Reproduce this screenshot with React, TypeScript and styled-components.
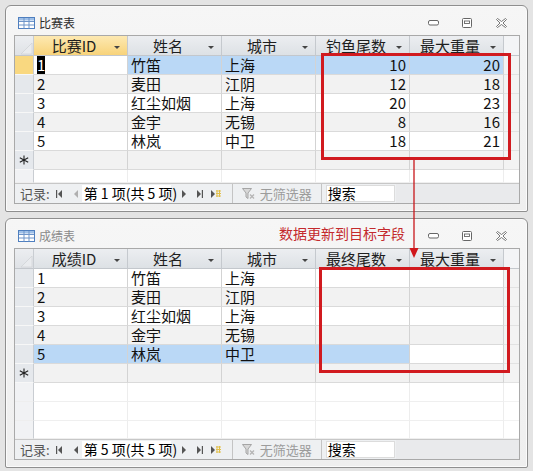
import React from "react";
import styled, { createGlobalStyle } from "styled-components";

const GlobalStyle = createGlobalStyle`
  html, body {
    margin: 0;
    padding: 0;
    background: #e4e4e4;
  }
  body {
    font-family: "Noto Sans CJK SC", "Liberation Sans", sans-serif;
  }
`;

const Page = styled.div`
  position: relative;
  width: 533px;
  height: 471px;
  padding: 5px 0 0 5px;
  box-sizing: border-box;
  display: flex;
  flex-direction: column;
  gap: 6px;
  overflow: hidden;
`;

const Window = styled.div`
  width: 523px;
  box-sizing: border-box;
  border: 1px solid #8f8f8f;
  border-radius: 6px 6px 2px 2px;
  background: linear-gradient(#f6f6f6, #efefef);
  box-shadow: inset 0 0 0 1px #fbfbfb;
  padding: 0 7px 7px 8px;
`;

const TitleBar = styled.div`
  height: 29px;
  padding-top: 5px;
  box-sizing: border-box;
  display: flex;
  align-items: center;
`;

const TableIcon = styled.svg`
  margin-left: 4px;
  flex: none;
`;

const TitleText = styled.span<{ $active: boolean }>`
  margin-left: 4px;
  font-size: 12px;
  line-height: 14px;
  color: ${(p) => (p.$active ? "#2b2b2b" : "#8a8a8a")};
`;

const Controls = styled.div`
  margin-left: auto;
  margin-right: 2px;
  display: flex;
`;

const ControlButton = styled.div`
  width: 34px;
  height: 20px;
  display: flex;
  align-items: center;
  justify-content: center;
`;

const Grid = styled.div`
  border: 1px solid #a9a9a9;
  background: #ffffff;
  display: flex;
  flex-direction: column;
`;

const HeaderRow = styled.div`
  display: flex;
  height: 20px;
`;

const Corner = styled.div`
  width: 19px;
  flex: none;
  box-sizing: border-box;
  border-right: 1px solid #c9cdd2;
  border-bottom: 1px solid #c3c7cc;
  background: linear-gradient(#eceef1, #dfe2e6);
  display: flex;
  align-items: flex-end;
  justify-content: flex-end;
`;

const HeaderCell = styled.div<{ $active?: boolean }>`
  width: 94px;
  flex: none;
  box-sizing: border-box;
  border-right: 1px solid #c5c9ce;
  border-bottom: 1px solid #c3c7cc;
  background: ${(p) =>
    p.$active
      ? "linear-gradient(#fde9b2, #f8d37a)"
      : "linear-gradient(#eceef1, #dde1e5)"};
  display: flex;
  align-items: center;
  padding-right: 7px;
  font-size: 15px;
  line-height: 18px;
  color: #1e1e1e;
`;

const HeaderLabel = styled.span`
  flex: 1;
  text-align: center;
  white-space: nowrap;
`;

const DropArrow = styled.span`
  width: 0;
  height: 0;
  border-left: 3px solid transparent;
  border-right: 3px solid transparent;
  border-top: 3px solid #444;
  margin-top: 3px;
`;

const HeaderFill = styled.div`
  flex: 1;
  border-bottom: 1px solid #c3c7cc;
  background: #f3f4f6;
`;

const Row = styled.div<{ $height?: number }>`
  display: flex;
  height: ${(p) => p.$height ?? 19}px;
`;

const Selector = styled.div<{ $current?: boolean; $faint?: boolean }>`
  width: 19px;
  flex: none;
  box-sizing: border-box;
  border-right: 1px solid #c9cdd2;
  border-bottom: 1px solid ${(p) => (p.$faint ? "#eeeeee" : "#f7f7f7")};
  background: ${(p) => (p.$current ? "#f9d880" : p.$faint ? "#f1f2f4" : "#e5e8ec")};
  display: flex;
  align-items: center;
  justify-content: center;
`;

const Cell = styled.div<{ $bg: string; $right?: boolean; $faint?: boolean }>`
  width: 94px;
  flex: none;
  box-sizing: border-box;
  border-right: 1px solid ${(p) => (p.$faint ? "#ededed" : "#d3d3d3")};
  border-bottom: 1px solid ${(p) => (p.$faint ? "#efefef" : "#dadada")};
  background: ${(p) => p.$bg};
  padding: 0 3px 0 3px;
  display: flex;
  align-items: center;
  justify-content: ${(p) => (p.$right ? "flex-end" : "flex-start")};
  font-size: 15px;
  line-height: 18px;
  color: #111;
  white-space: nowrap;
`;

const RowFill = styled.div<{ $faint?: boolean }>`
  flex: 1;
  border-bottom: 1px solid ${(p) => (p.$faint ? "#f2f2f2" : "#e2e2e2")};
  background: ${(p) => (p.$faint ? "#ffffff" : "#f3f3f3")};
`;

const Caret = styled.span`
  background: #000;
  color: #fff;
`;

const NavBar = styled.div`
  height: 19px;
  border-top: 1px solid #c7c7c7;
  background: #eef0f2;
  display: flex;
  align-items: center;
  font-size: 13px;
  color: #555;
`;

const NavLabel = styled.span`
  margin-left: 5px;
  line-height: 16px;
  white-space: nowrap;
`;

const NavIcon = styled.svg<{ $gap: number }>`
  margin-left: ${(p) => p.$gap}px;
  flex: none;
`;

const RecordBox = styled.div`
  margin-left: 4px;
  width: 89px;
  height: 17px;
  background: #fff;
  color: #000;
  font-size: 14px;
  line-height: 17px;
  padding-left: 2px;
  box-sizing: border-box;
  white-space: nowrap;
`;

const Separator = styled.div<{ $gap: number }>`
  margin-left: ${(p) => p.$gap}px;
  width: 1px;
  height: 19px;
  background: #c4c4c4;
  flex: none;
`;

const FilterText = styled.span`
  margin-left: 5px;
  color: #9c9c9c;
  font-size: 13px;
  white-space: nowrap;
`;

const SearchBox = styled.div`
  margin-left: 4px;
  width: 69px;
  height: 17px;
  box-sizing: border-box;
  background: #fff;
  border: 1px solid #dcdcdc;
  color: #000;
  font-size: 14px;
  line-height: 15px;
  padding-left: 1px;
`;

const NavRest = styled.div`
  flex: 1;
  align-self: stretch;
  margin-left: 1px;
  background: #e9eaec;
`;

const RedBox = styled.div<{ $x: number; $y: number; $w: number; $h: number }>`
  position: absolute;
  left: ${(p) => p.$x}px;
  top: ${(p) => p.$y}px;
  width: ${(p) => p.$w}px;
  height: ${(p) => p.$h}px;
  box-sizing: border-box;
  border: 3px solid #d11a1f;
  pointer-events: none;
`;

const Note = styled.div`
  position: absolute;
  left: 279px;
  top: 224px;
  font-size: 14px;
  line-height: 18px;
  color: #c42a2d;
  white-space: nowrap;
`;

const ArrowSvg = styled.svg`
  position: absolute;
  left: 408px;
  top: 160px;
`;

const TableGlyph = () => (
  <TableIcon width="17" height="12" viewBox="0 0 17 12">
    <rect x="0.5" y="0.5" width="16" height="11" fill="#fff" stroke="#4f7fbf" />
    <rect x="1" y="1" width="15" height="2.5" fill="#9fc0e8" />
    <path d="M1 4.5h15M1 8h15M6 1v10.5M11 1v10.5" stroke="#6f95c9" strokeWidth="1" />
  </TableIcon>
);

const WindowControls = () => (
  <Controls>
    <ControlButton>
      <svg width="11" height="6" viewBox="0 0 11 6">
        <rect x="0.5" y="0.5" width="10" height="4.5" rx="1.5" fill="#fff" stroke="#666" />
      </svg>
    </ControlButton>
    <ControlButton>
      <svg width="10" height="10" viewBox="0 0 10 10">
        <rect x="0.5" y="0.5" width="9" height="9" rx="1" fill="#fff" stroke="#666" />
        <rect x="2.5" y="3" width="5" height="2.5" fill="#fff" stroke="#666" strokeWidth="0.9" />
      </svg>
    </ControlButton>
    <ControlButton>
      <svg width="11" height="10" viewBox="0 0 11 10">
        <path
          d="M0.5 1.5L1.5 0.5L5.5 3.5L9.5 0.5L10.5 1.5L7 5L10.5 8.5L9.5 9.5L5.5 6.5L1.5 9.5L0.5 8.5L4 5Z"
          fill="#fff"
          stroke="#666"
          strokeWidth="0.9"
        />
      </svg>
    </ControlButton>
  </Controls>
);

const Star = () => (
  <svg width="10" height="10" viewBox="0 0 10 10">
    <path d="M5 0.5v9M0.8 2.7l8.4 4.6M0.8 7.3l8.4-4.6" stroke="#222" strokeWidth="1.1" />
  </svg>
);

const FirstIcon = ({ gap }: { gap: number }) => (
  <NavIcon $gap={gap} width="6" height="8" viewBox="0 0 6 8">
    <rect x="0" y="0" width="1.2" height="8" fill="#555" />
    <path d="M6 0v8L2 4z" fill="#555" />
  </NavIcon>
);

const PrevIcon = ({ gap, color }: { gap: number; color: string }) => (
  <NavIcon $gap={gap} width="4" height="8" viewBox="0 0 4 8">
    <path d="M4 0v8L0 4z" fill={color} />
  </NavIcon>
);

const NextIcon = ({ gap }: { gap: number }) => (
  <NavIcon $gap={gap} width="4" height="8" viewBox="0 0 4 8">
    <path d="M0 0v8L4 4z" fill="#555" />
  </NavIcon>
);

const LastIcon = ({ gap }: { gap: number }) => (
  <NavIcon $gap={gap} width="6" height="8" viewBox="0 0 6 8">
    <path d="M0 0v8L4 4z" fill="#555" />
    <rect x="4.8" y="0" width="1.2" height="8" fill="#555" />
  </NavIcon>
);

const NewIcon = ({ gap }: { gap: number }) => (
  <NavIcon $gap={gap} width="10" height="8" viewBox="0 0 10 8">
    <path d="M0 0v8L4 4z" fill="#555" />
    <path d="M5 1h5M5 3.5h5M5 6h5M6 0v7M8.5 0v7" stroke="#e2c04a" strokeWidth="1" />
  </NavIcon>
);

const FilterIcon = () => (
  <NavIcon $gap={9} width="13" height="12" viewBox="0 0 13 12">
    <path d="M0.5 0.5h9L6 5v5.5L4 9V5z" fill="#d8d8d8" stroke="#a5a5a5" />
    <path d="M8 6.5l4 4M12 6.5l-4 4" stroke="#b5b5b5" strokeWidth="1.3" />
  </NavIcon>
);

type Value = string | number;

interface TableProps {
  title: string;
  active: boolean;
  columns: string[];
  rows: Value[][];
  numeric: boolean[];
  currentRow: number;
  currentCol: number;
  activeHeader?: number;
  fillers: number[];
}

const SELECT_BG = "#bad8f6";

const DataWindow = ({
  title,
  active,
  columns,
  rows,
  numeric,
  currentRow,
  currentCol,
  activeHeader,
  fillers,
}: TableProps) => {
  const rowBg = (r: number, c: number) => {
    if (r === currentRow) return c === currentCol ? "#ffffff" : SELECT_BG;
    return r % 2 === 1 ? "#f2f2f2" : "#ffffff";
  };

  return (
    <Window>
      <TitleBar>
        <TableGlyph />
        <TitleText $active={active}>{title}</TitleText>
        <WindowControls />
      </TitleBar>
      <Grid>
        <HeaderRow>
          <Corner>
            <svg width="14" height="14" viewBox="0 0 14 14">
              <path d="M13 2V13H2Z" fill="#e9ebee" stroke="#d0d3d7" strokeWidth="0.8" />
            </svg>
          </Corner>
          {columns.map((c, i) => (
            <HeaderCell key={c} $active={i === activeHeader}>
              <HeaderLabel>{c}</HeaderLabel>
              <DropArrow />
            </HeaderCell>
          ))}
          <HeaderFill />
        </HeaderRow>

        {rows.map((row, r) => (
          <Row key={r}>
            <Selector $current={active && r === currentRow} />
            {row.map((v, c) => (
              <Cell key={c} $bg={rowBg(r, c)} $right={numeric[c]}>
                {active && r === currentRow && c === currentCol ? <Caret>{v}</Caret> : v}
              </Cell>
            ))}
            <RowFill />
          </Row>
        ))}

        <Row>
          <Selector>
            <Star />
          </Selector>
          {columns.map((c, i) => (
            <Cell key={c} $bg={rows.length % 2 === 1 ? "#f2f2f2" : "#ffffff"} $right={numeric[i]} />
          ))}
          <RowFill />
        </Row>

        {fillers.map((h, k) => (
          <Row key={k} $height={h}>
            <Selector $faint />
            {columns.map((c) => (
              <Cell key={c} $bg="#ffffff" $faint />
            ))}
            <RowFill $faint />
          </Row>
        ))}

        <NavBar>
          <NavLabel>记录:</NavLabel>
          <FirstIcon gap={6} />
          <PrevIcon gap={12} color={currentRow === 0 ? "#b0b0b0" : "#555"} />
          <RecordBox>
            第 {currentRow + 1} 项(共 {rows.length} 项)
          </RecordBox>
          <NextIcon gap={11} />
          <LastIcon gap={11} />
          <NewIcon gap={8} />
          <Separator $gap={11} />
          <FilterIcon />
          <FilterText>无筛选器</FilterText>
          <Separator $gap={9} />
          <SearchBox>搜索</SearchBox>
          <NavRest />
        </NavBar>
      </Grid>
    </Window>
  );
};

const matchRows: Value[][] = [
  [1, "竹笛", "上海", 10, 20],
  [2, "麦田", "江阴", 12, 18],
  [3, "红尘如烟", "上海", 20, 23],
  [4, "金宇", "无锡", 8, 16],
  [5, "林岚", "中卫", 18, 21],
];

const scoreRows: Value[][] = matchRows.map((r) => [r[0], r[1], r[2], "", ""]);

export default function App() {
  return (
    <>
      <GlobalStyle />
      <Page>
        <DataWindow
          title="比赛表"
          active
          columns={["比赛ID", "姓名", "城市", "钓鱼尾数", "最大重量"]}
          rows={matchRows}
          numeric={[false, false, false, true, true]}
          currentRow={0}
          currentCol={0}
          activeHeader={0}
          fillers={[13]}
        />
        <DataWindow
          title="成绩表"
          active={false}
          columns={["成绩ID", "姓名", "城市", "最终尾数", "最大重量"]}
          rows={scoreRows}
          numeric={[false, false, false, true, true]}
          currentRow={4}
          currentCol={4}
          fillers={[19, 19, 18]}
        />

        <RedBox $x={321} $y={53} $w={190} $h={107} />
        <RedBox $x={319} $y={267} $w={191} $h={106} />
        <ArrowSvg width="14" height="100" viewBox="0 0 14 100">
          <line x1="6" y1="0" x2="6" y2="90" stroke="#c8161b" strokeWidth="1.3" />
          <path d="M1.5 88H10.5L6 98Z" fill="#d0161b" />
        </ArrowSvg>
        <Note>数据更新到目标字段</Note>
      </Page>
    </>
  );
}
